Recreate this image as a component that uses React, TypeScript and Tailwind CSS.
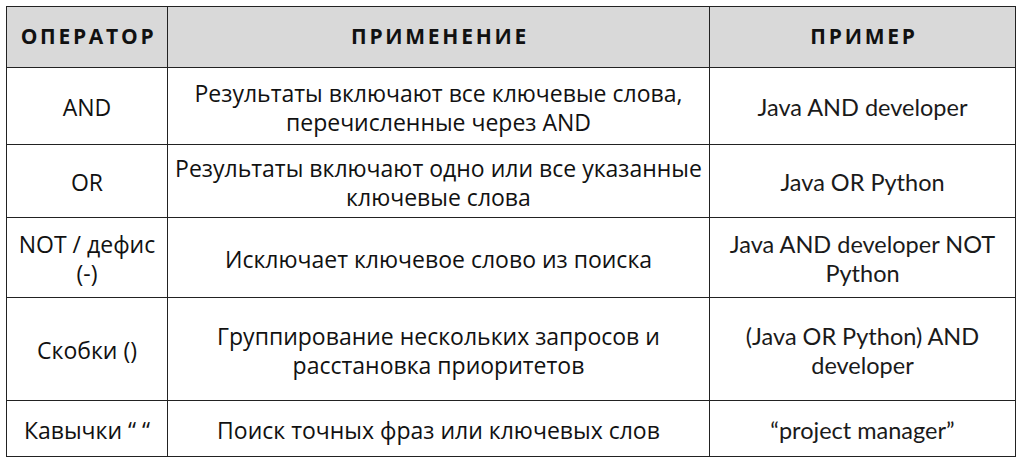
const rows: { op: string[]; use: string[]; example: string[]; h: string }[] = [
  { op: ["AND"], use: ["Результаты включают все ключевые слова,", "перечисленные через AND"], example: ["Java AND developer"], h: "h-[77px]" },
  { op: ["OR"], use: ["Результаты включают одно или все указанные", "ключевые слова"], example: ["Java OR Python"], h: "h-[73px]" },
  { op: ["NOT / дефис", "(-)"], use: ["Исключает ключевое слово из поиска"], example: ["Java AND developer NOT", "Python"], h: "h-[80px]" },
  { op: ["Скобки ()"], use: ["Группирование нескольких запросов и", "расстановка приоритетов"], example: ["(Java OR Python) AND", "developer"], h: "h-[103px]" },
  { op: ["Кавычки “ “"], use: ["Поиск точных фраз или ключевых слов"], example: ["“project manager”"], h: "h-[56px]" },
];

function Lines({ lines }: { lines: string[] }) {
  return (
    <>
      {lines.map((line) => (
        <span key={line} className="block whitespace-nowrap">
          {line}
        </span>
      ))}
    </>
  );
}

export default function App() {
  return (
    <div className="min-h-[464px] w-[1022px] bg-white pl-[6px] pt-[6px] font-['Open_Sans',sans-serif] text-[#111]">
      <table className="w-[1009px] table-fixed border-collapse">
        <colgroup>
          <col className="w-[161px]" />
          <col className="w-[542px]" />
          <col className="w-[306px]" />
        </colgroup>
        <thead>
          <tr className="h-[61px] bg-[#d9d9d9] text-[21px] font-bold tracking-[0.13em]">
            <th className="border-[1.5px] border-[#222] pl-[3px] text-center">ОПЕРАТОР</th>
            <th className="border-[1.5px] border-[#222] pl-[3px] text-center">ПРИМЕНЕНИЕ</th>
            <th className="border-[1.5px] border-[#222] pl-[3px] text-center">ПРИМЕР</th>
          </tr>
        </thead>
        <tbody className="text-[23px] leading-[29px]">
          {rows.map((row) => (
            <tr key={row.op[0]} className={row.h}>
              <td className="border-[1.5px] border-[#222] pt-[3px] text-center align-middle">
                <Lines lines={row.op} />
              </td>
              <td className="border-[1.5px] border-[#222] pt-[3px] text-center align-middle">
                <Lines lines={row.use} />
              </td>
              <td className="border-[1.5px] border-[#222] pt-[3px] text-center align-middle font-['Lato',sans-serif] text-[23.5px] text-[#1a1a1a]">
                <Lines lines={row.example} />
              </td>
            </tr>
          ))}
        </tbody>
      </table>
    </div>
  );
}
